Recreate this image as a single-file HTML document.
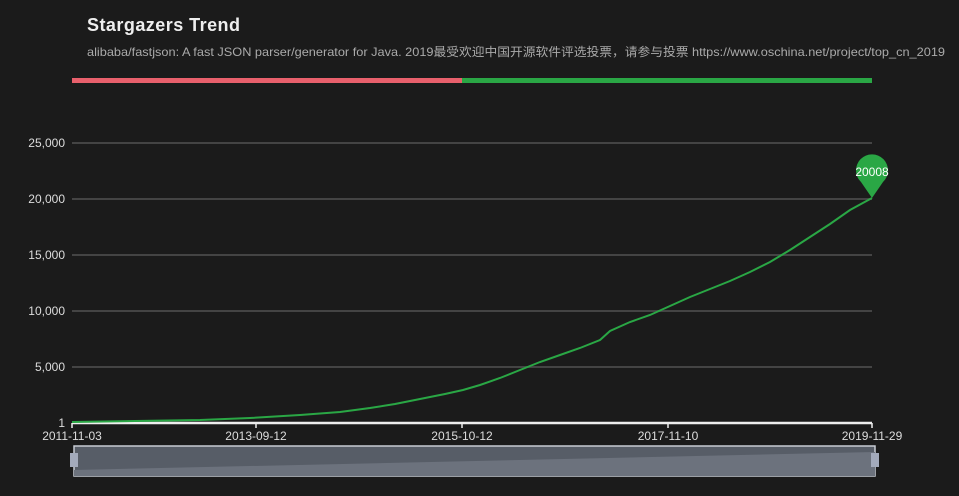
<!DOCTYPE html><html><head><style>
body{margin:0;background:#1b1b1b;width:959px;height:496px;overflow:hidden;font-family:"Liberation Sans","Noto Sans CJK SC",sans-serif}
</style></head><body>
<svg width="959" height="496" xmlns="http://www.w3.org/2000/svg" style="position:absolute;left:0;top:0">
<text x="87" y="31" fill="#eee" font-size="18" font-weight="bold" font-family="Liberation Sans,sans-serif" textLength="153">Stargazers Trend</text>
<text x="87" y="56" fill="#aaa" font-size="12" font-family="Liberation Sans,Noto Sans CJK SC,sans-serif" textLength="858" lengthAdjust="spacingAndGlyphs">alibaba/fastjson: A fast JSON parser/generator for Java.  2019最受欢迎中国开源软件评选投票，请参与投票 https://www.oschina.net/project/top_cn_2019</text>
<rect x="72" y="78" width="390" height="5" fill="#e8606c"/>
<rect x="462" y="78" width="410" height="5" fill="#2aa745"/>
<g stroke="#444" stroke-width="2">
<line x1="72" y1="143" x2="872" y2="143"/><line x1="72" y1="199" x2="872" y2="199"/><line x1="72" y1="255" x2="872" y2="255"/><line x1="72" y1="311" x2="872" y2="311"/><line x1="72" y1="367" x2="872" y2="367"/>
</g>
<g fill="#ddd" font-size="12" text-anchor="end">
<text x="65" y="147">25,000</text><text x="65" y="203">20,000</text><text x="65" y="259">15,000</text><text x="65" y="315">10,000</text><text x="65" y="371">5,000</text><text x="65" y="427">1</text>
</g>
<line x1="72" y1="423" x2="872" y2="423" stroke="#eee" stroke-width="2.5"/>
<g stroke="#eee" stroke-width="1.5"><line x1="72" y1="423" x2="72" y2="428"/><line x1="256" y1="423" x2="256" y2="428"/><line x1="462" y1="423" x2="462" y2="428"/><line x1="668" y1="423" x2="668" y2="428"/><line x1="872" y1="423" x2="872" y2="428"/></g>
<g fill="#ddd" font-size="12" text-anchor="middle">
<text x="72" y="440">2011-11-03</text><text x="256" y="440">2013-09-12</text><text x="462" y="440">2015-10-12</text><text x="668" y="440">2017-11-10</text><text x="872" y="440">2019-11-29</text>
</g>
<polyline fill="none" stroke="#2aa745" stroke-width="2" points="72,422 200,420 250,418 300,415 340,412 370,408 395,404 420,399 445,394 463,390 480,385 500,378 520,370 540,362 560,355 580,348 600,340 610,331 630,322 650,315 670,306 690,297 710,289 730,281 750,272 770,262 790,250 810,237 830,224 850,210 872,198"/>
<path d="M872,198 L861,182 A16,16 0 1 1 883,182 Z" fill="#2aa745"/>
<text x="872" y="176" fill="#fff" font-size="12" text-anchor="middle">20008</text>
<rect x="74" y="446" width="801" height="30" fill="#575d67" stroke="#c8ccd4" stroke-width="1.5"/>
<polygon points="74,476 74,470 875,452 875,476" fill="#6c727d"/>
<rect x="70" y="453" width="8" height="14" fill="#a3aabb"/>
<rect x="871" y="453" width="8" height="14" fill="#a3aabb"/>
</svg>
</body></html>
